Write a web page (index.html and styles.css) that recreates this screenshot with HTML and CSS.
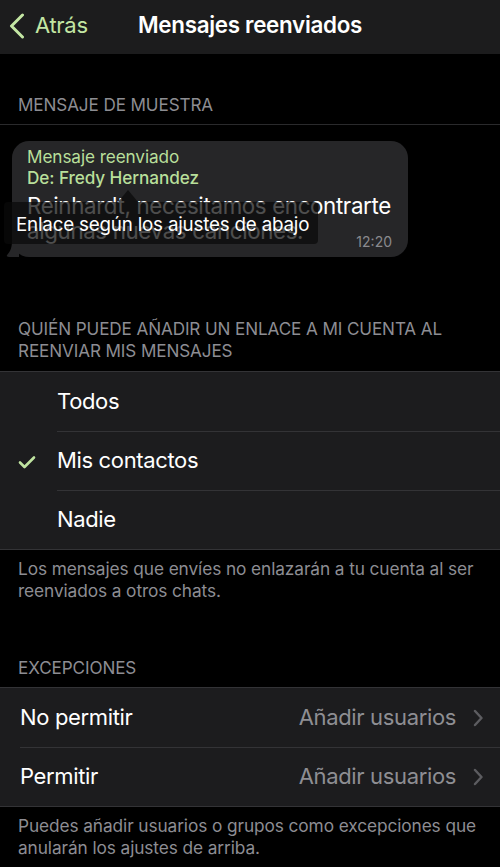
FILE: index.html
```html
<!DOCTYPE html>
<html lang="es">
<head>
<meta charset="utf-8">
<title>Mensajes reenviados</title>
<link rel="stylesheet" href="styles.css">
</head>
<body>
<div class="screen">
  <header class="nav">
    <a class="back">
      <svg class="back-icon" width="18" height="26" viewBox="0 0 18 26"><path d="M14.5 2 L3.5 13 L14.5 24" fill="none" stroke="#c3e6a3" stroke-width="3" stroke-linecap="round" stroke-linejoin="round"/></svg>
      <span>Atrás</span>
    </a>
    <h1 class="title">Mensajes reenviados</h1>
  </header>

  <div class="sec-head first">MENSAJE DE MUESTRA</div>
  <div class="chat">
    <div class="bubble">
      <svg class="tail" width="14" height="16" viewBox="0 0 14 16"><path d="M14 0 L14 16 L4 16 C2 16 1 15 2.5 13.5 C6 10 7 5 7 0 Z" fill="#262628"/></svg>
      <div class="fwd">Mensaje reenviado</div>
      <div class="fwd from">De: Fredy Hernandez</div>
      <div class="msg">Reinhardt, necesitamos encontrarte algunas nuevas canciones.</div>
      <div class="time">12:20</div>
    </div>
    <div class="tip">
      <span class="tip-arrow"></span>
      Enlace según los ajustes de abajo
    </div>
  </div>

  <div class="sec-head two">QUIÉN PUEDE AÑADIR UN ENLACE A MI CUENTA AL REENVIAR MIS MENSAJES</div>
  <div class="group">
    <div class="row opt"><span class="check"></span><span class="label">Todos</span></div>
    <div class="row opt"><span class="check"><svg width="18" height="14" viewBox="0 0 18 14"><path d="M2 7.5 L6.5 12 L16 2.5" fill="none" stroke="#bfe3a0" stroke-width="2.6" stroke-linecap="round" stroke-linejoin="round"/></svg></span><span class="label">Mis contactos</span></div>
    <div class="row opt"><span class="check"></span><span class="label">Nadie</span></div>
  </div>
  <div class="sec-foot">Los mensajes que envíes no enlazarán a tu cuenta al ser reenviados a otros chats.</div>

  <div class="sec-head three">EXCEPCIONES</div>
  <div class="group">
    <div class="row link"><span class="label">No permitir</span><span class="value">Añadir usuarios</span><svg class="chev" width="10" height="18" viewBox="0 0 10 18"><path d="M2 2 L8.5 9 L2 16" fill="none" stroke="#5c5c60" stroke-width="2.4" stroke-linecap="round" stroke-linejoin="round"/></svg></div>
    <div class="row link"><span class="label">Permitir</span><span class="value">Añadir usuarios</span><svg class="chev" width="10" height="18" viewBox="0 0 10 18"><path d="M2 2 L8.5 9 L2 16" fill="none" stroke="#5c5c60" stroke-width="2.4" stroke-linecap="round" stroke-linejoin="round"/></svg></div>
  </div>
  <div class="sec-foot">Puedes añadir usuarios o grupos como excepciones que anularán los ajustes de arriba.</div>
</div>
</body>
</html>
```

FILE: styles.css
```css
* { box-sizing: border-box; }
html, body { margin: 0; padding: 0; background: #000; }
body {
  font-family: Inter, "Noto Sans", "DejaVu Sans", sans-serif;
  color: #fff;
  width: 500px;
  height: 867px;
  overflow: hidden;
}
.screen { display: flex; flex-direction: column; }

.nav {
  height: 54px;
  background: #1c1c1d;
  display: flex;
  align-items: center;
  justify-content: center;
  position: relative;
}
.back {
  position: absolute;
  left: 8px;
  top: 0;
  height: 54px;
  display: flex;
  align-items: center;
  gap: 9px;
  color: #c3e6a3;
  font-size: 22px;
  letter-spacing: -0.3px;
}
.back-icon { margin-top: -2px; }
.back span { margin-top: -4px; }
.title {
  margin: -6px 0 0 0;
  font-size: 22.4px;
  font-weight: 600;
  letter-spacing: -0.3px;
}

.sec-head {
  color: #8d8d93;
  font-size: 17.1px;
  line-height: 22px;
  padding: 0 18px;
  letter-spacing: -0.1px;
}
.sec-head.first { margin-top: 40px; padding-bottom: 8px; border-bottom: 1px solid #2a2a2c; }
.sec-head.two { margin-top: 53px; padding-bottom: 9px; padding-right: 40px; }
.sec-head.three { margin-top: 55px; padding-bottom: 8px; }

.chat {
  position: relative;
  padding: 16px 0 0 12px;
  height: 140px;
}
.bubble {
  position: relative;
  width: 396px;
  height: 116px;
  background: #262628;
  border-radius: 17px;
  padding: 5px 15px 0 15px;
}
.tail { position: absolute; left: -7px; bottom: 0; }
.fwd {
  color: #b8df9a;
  font-size: 17.2px;
  line-height: 21px;
  letter-spacing: -0.1px;
}
.fwd.from { font-weight: 500; }
.msg {
  font-size: 22.3px;
  line-height: 25px;
  letter-spacing: -0.35px;
  margin-top: 5px;
  width: 380px;
}
.time {
  position: absolute;
  right: 16px;
  bottom: 7px;
  font-size: 14px;
  color: #8a8a8e;
}
.tip {
  position: absolute;
  left: 4px;
  top: 77px;
  width: 314px;
  height: 42px;
  background: rgba(10, 10, 10, 0.72);
  border-radius: 4px;
  padding-left: 12px;
  padding-top: 3px;
  display: flex;
  align-items: center;
  font-size: 18.8px;
  letter-spacing: -0.2px;
  color: #fff;
}
.tip-arrow {
  position: absolute;
  left: 114px;
  top: -12px;
  width: 0;
  height: 0;
  border-left: 10px solid transparent;
  border-right: 10px solid transparent;
  border-bottom: 12px solid rgba(10, 10, 10, 0.72);
}

.group {
  background: #1c1c1e;
  border-top: 1px solid #333336;
  border-bottom: 1px solid #333336;
}
.row {
  height: 59px;
  display: flex;
  align-items: center;
  font-size: 22px;
  letter-spacing: -0.35px;
  position: relative;
}
.row + .row::before {
  content: "";
  position: absolute;
  top: 0;
  right: 0;
  height: 1px;
  background: #333336;
}
.row.opt + .row.opt::before { left: 57px; }
.row.link + .row.link::before { left: 20px; }
.row .label { margin-top: -2px; }
.row.opt .check {
  width: 57px;
  display: flex;
  justify-content: flex-start;
  padding-left: 18px;
  padding-top: 2px;
}
.row.link { padding: 0 17px 0 20px; }
.row.link .label { flex: 1; }
.row.link .value { color: #8e8e93; margin-top: -2px; margin-right: 17px; }
.chev { margin-top: 0; }

.sec-foot {
  color: #8d8d93;
  font-size: 17.3px;
  line-height: 22px;
  padding: 8px 18px 0 18px;
  letter-spacing: -0.1px;
}
```
